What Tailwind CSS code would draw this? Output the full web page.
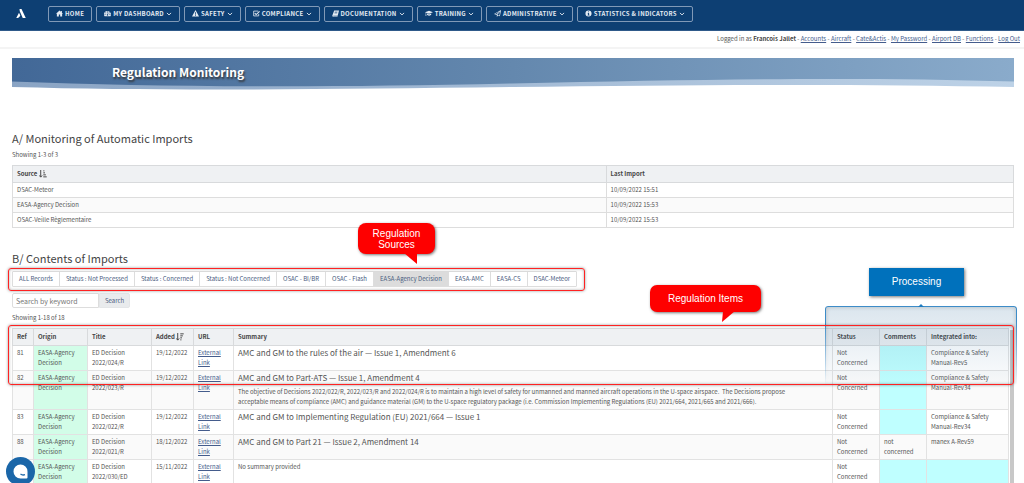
<!DOCTYPE html>
<html lang="en">
<head>
<meta charset="utf-8">
<meta name="viewport" content="width=device-width, initial-scale=1">
<title>Regulation Monitoring</title>
<script src="https://cdn.jsdelivr.net/npm/@tailwindcss/browser@4"></script>
</head>
<body class="relative h-screen overflow-hidden bg-white font-['Noto_Sans_CJK_SC','Noto_Sans',sans-serif] text-[6px] leading-[10px] text-[#555]">

<svg class="hidden" aria-hidden="true">
  <symbol id="chev" viewBox="0 0 8 8"><path d="M1.2 2.6 4 5.2 6.8 2.6" fill="none" stroke="currentColor" stroke-width="1.2"/></symbol>
</svg>

<header class="flex h-[31px] items-center border-b border-[#2f5a8a] bg-[#0d3f73] text-white">
  <a href="#" aria-label="Home page" class="ml-4 block w-8 pb-1">
    <svg class="h-[9px] w-[10px]" viewBox="0 0 20 18" fill="currentColor"><path d="M7 0h4l8.500 18h-6L7.500 4.500zM6 7.500l2.600 5.300C7.500 16 4.500 18 .5 18z"/></svg>
  </a>
  <nav class="flex gap-1 pb-[3px] leading-none font-bold text-[#e4ebf3] [&>button]:flex [&>button]:h-4 [&>button]:items-center [&>button]:gap-[2px] [&>button]:rounded-[2px] [&>button]:border [&>button]:border-[#8099b7] [&>button]:px-[7px] [&>button]:tracking-wider [&>button]:whitespace-nowrap">
    <button><svg class="size-[7px]" viewBox="0 0 16 16" fill="currentColor"><path d="M8 1 0 8.500h2V15h4.500v-4.500h3V15H14V8.500h2L13.500 6V2h-2v2.200z"/></svg>HOME</button>
    <button><svg class="size-[7px]" viewBox="0 0 16 16" fill="currentColor"><path fill-rule="evenodd" d="M8 2a8 8 0 0 0-8 8c0 1.600.5 3 1.200 4h13.600A8 8 0 0 0 8 2zM7 3.500h2v2H7zM3 5.500h2v2H3zm8 0h2v2h-2zM1.500 9.500h2v2h-2zm11 0h2v2h-2zM9 6l1 .3-.8 3.700A1.700 1.700 0 1 1 8 9.500z"/></svg>MY DASHBOARD<svg class="size-[6px]"><use href="#chev"/></svg></button>
    <button><svg class="size-[7px]" viewBox="0 0 16 16" fill="currentColor"><path fill-rule="evenodd" d="M8 0 0 15h16zM7 5h2l-.3 5H7.300zm0 6h2v2H7z"/></svg>SAFETY<svg class="size-[6px]"><use href="#chev"/></svg></button>
    <button><svg class="size-[7px]" viewBox="0 0 16 16" fill="none" stroke="currentColor" stroke-width="1.800"><path d="M13 9v4.500H1.500V2.500H12"/><path d="m4 7 3.300 3.500L15 3" stroke-width="2.500"/></svg>COMPLIANCE<svg class="size-[6px]"><use href="#chev"/></svg></button>
    <button><svg class="size-[7px]" viewBox="0 0 16 16" fill="currentColor"><path fill-rule="evenodd" d="M5 1h11l-3 12H3.500c-.8 0-.8 1.200 0 1.200H13l-.3 1.300H2.500C.5 15.500.5 13 1.200 11.500zM6.500 4l-.3 1h6l.3-1zm-.6 2.500-.3 1h6l.3-1z"/></svg>DOCUMENTATION<svg class="size-[6px]"><use href="#chev"/></svg></button>
    <button><svg class="h-[7px] w-2" viewBox="0 0 18 16" fill="currentColor"><path d="M9 1.500 18 5 9 8.500 2.500 6v3l.7 4H.8l.7-4V5.500L0 5zM4.500 8.200 9 10l5-1.800V11c-1 2.500-8.500 2.500-9.500 0z"/></svg>TRAINING<svg class="size-[6px]"><use href="#chev"/></svg></button>
    <button><svg class="size-[7px]" viewBox="0 0 16 16" fill="currentColor"><path fill-rule="evenodd" d="M16 0 13.500 14.500 9 12.700 6.500 16v-4.500L0 9zM13.500 3 3 8.700l2.500 1zM13.800 4 7.500 10.700l4.800 2z"/></svg>ADMINISTRATIVE<svg class="size-[6px]"><use href="#chev"/></svg></button>
    <button><svg class="size-[7px]" viewBox="0 0 16 16" fill="currentColor"><path fill-rule="evenodd" d="M8 1a7 7 0 1 0 0 14A7 7 0 0 0 8 1zM6.800 3.200h2.400v2.200H6.800zM6 6.600h3.300v4.400h1v1.700H6V11h1V8.200H6z"/></svg>STATISTICS &amp; INDICATORS<svg class="size-[6px]"><use href="#chev"/></svg></button>
  </nav>
</header>

<div class="flex h-[18px] items-center justify-end border-b-2 border-[#f4f4f4] pr-1">
  <p class="[&_a]:text-[#445c8c] [&_a]:underline">Logged in as <b class="text-[#444]">Francois Jallet</b> - <a href="#">Accounts</a> - <a href="#">Aircraft</a> - <a href="#">Cate&amp;Actis</a> - <a href="#">My Password</a> - <a href="#">Airport DB</a> - <a href="#">Functions</a> - <a href="#">Log Out</a></p>
</div>

<main class="pr-[10px] pl-3">
  <div class="relative mt-[9px] h-8">
    <svg class="absolute inset-0 size-full" viewBox="0 0 1002 32" preserveAspectRatio="none" aria-hidden="true">
      <defs>
        <linearGradient id="deep"><stop offset="0" stop-color="#426897"/><stop offset=".5" stop-color="#6488ae"/><stop offset="1" stop-color="#8aabcb"/></linearGradient>
        <linearGradient id="pale"><stop offset="0" stop-color="#8aa4c4"/><stop offset="1" stop-color="#bdd2e7"/></linearGradient>
      </defs>
      <path fill="url(#pale)" d="M0 0H1002V29C850 26 700 26.500 500 29S150 33 0 29z"/>
      <path fill="url(#deep)" d="M0 0H1002V23.500C850 19 700 21 500 25.500S150 29 0 23.500z"/>
    </svg>
    <h1 class="relative pl-[100px] text-[12px] leading-[27px] font-bold text-white [text-shadow:1px_2px_2px_#333]">Regulation Monitoring</h1>
  </div>

  <h2 class="mt-[40px] text-[11px] leading-4 text-[#444]">A/ Monitoring of Automatic Imports</h2>
  <p class="mt-1">Showing 1-3 of 3</p>
  <table class="mt-[5px] w-full table-fixed border-collapse text-left [&_td]:border [&_td]:border-[#ddd] [&_td]:px-1 [&_td]:py-[2px] [&_th]:border [&_th]:border-[#d8dadc] [&_th]:px-1 [&_th]:py-[3px]">
    <thead><tr class="bg-[#eff1f3] text-[#444]">
      <th class="w-[59.3%]"><span class="inline-flex items-center gap-[2px]">Source<svg class="size-2" viewBox="0 0 14 14" fill="none" stroke="currentColor" stroke-width="1.700"><path d="M3 0v12M.5 9.500 3 12.500l2.500-3M7.500 1.500h2M7.500 5h3M7.500 8.500h4.500M7.500 12h6"/></svg></span></th>
      <th>Last Import</th></tr></thead>
    <tbody>
      <tr><td>DSAC-Meteor</td><td>10/09/2022 15:51</td></tr>
      <tr class="bg-[#fafafa]"><td>EASA-Agency Decision</td><td>10/09/2022 15:53</td></tr>
      <tr><td>OSAC-Veille Règlementaire</td><td>10/09/2022 15:53</td></tr>
    </tbody>
  </table>

  <h2 class="mt-[22px] text-[11px] leading-4 text-[#444]">B/ Contents of Imports</h2>
  <div class="relative mt-[5px] w-max">
    <div class="flex h-4 rounded-[1px] border border-[#ddd] text-[#4b5c80] [&>button]:border-r [&>button]:border-[#ddd] [&>button]:px-[6px] [&>button]:whitespace-nowrap [&>button:last-child]:border-r-0">
      <button>ALL Records</button><button>Status : Not Processed</button><button>Status : Concerned</button><button>Status : Not Concerned</button><button>OSAC - BI/BR</button><button>OSAC - Flash</button><button class="bg-[#dcdcdc]">EASA-Agency Decision</button><button>EASA-AMC</button><button>EASA-CS</button><button>DSAC-Meteor</button>
    </div>
    <div class="pointer-events-none absolute -top-[3px] -right-2 -bottom-1 -left-[4px] rounded-[3px] border border-[#f22] shadow-[0_0_3px_#0006,inset_0_0_3px_#0005]"></div>
    <div class="absolute bottom-[33px] left-[346px] flex h-[31px] w-[77px] items-center justify-center rounded-[8px] bg-[#fe0000] text-center font-['Liberation_Sans',sans-serif] text-[10px] leading-[11px] text-white shadow-[1px_1px_3px_#0008]">Regulation<br>Sources
      <svg class="absolute top-[30px] left-[46px] h-3 w-[14px]" viewBox="0 0 14 12" fill="#fe0000"><path d="M0 0h13v11z"/></svg>
    </div>
  </div>

  <form class="mt-[6px] flex h-[15px]">
    <input aria-label="Search by keyword" placeholder="Search by keyword" class="w-[87px] rounded-l-[2px] border border-[#ddd] px-[3px] text-[7px] placeholder:text-[#777]">
    <button type="button" class="rounded-r-[2px] border border-[#e4e6e8] bg-[#e9ebed] px-[5px] text-[#4b5c80]">Search</button>
  </form>
  <p class="mt-[5px]">Showing 1-18 of 18</p>

  <div class="relative mt-[5px] pr-[5px]">
    <table class="w-full table-fixed border-collapse text-left align-top [&_td]:border [&_td]:border-[#e2e2e2] [&_td]:px-1 [&_td]:py-[2px] [&_td]:align-top [&_th]:border [&_th]:border-[#d8dadc] [&_th]:px-1 [&_th]:py-[3px] [&_th]:whitespace-nowrap [&_a]:text-[#445c8c] [&_a]:underline">
      <colgroup><col class="w-[21px]"><col class="w-[54px]"><col class="w-16"><col class="w-[42px]"><col class="w-10"><col><col class="w-[47px]"><col class="w-[47px]"><col class="w-[82px]"></colgroup>
      <thead><tr class="bg-[#eff1f3] text-[#444]"><th>Ref</th><th>Origin</th><th>Title</th><th><span class="inline-flex items-center gap-px">Added<svg class="size-2" viewBox="0 0 14 14" fill="none" stroke="currentColor" stroke-width="1.700"><path d="M3 0v12M.5 9.500 3 12.500l2.500-3M7.500 1.500h6M7.500 5h4.500M7.500 8.500h3M7.500 12h2"/></svg></span></th><th>URL</th><th>Summary</th><th>Status</th><th>Comments</th><th>Integrated into:</th></tr></thead>
      <tbody>
        <tr><td>81</td><td class="bg-[#d2fde8]">EASA-Agency Decision</td><td>ED Decision 2022/024/R</td><td>19/12/2022</td><td><a href="#">External<br>Link</a></td><td><p class="text-[8px]">AMC and GM to the rules of the air — Issue 1, Amendment 6</p></td><td>Not Concerned</td><td class="bg-[#bfffff]"></td><td>Compliance &amp; Safety Manual-Rev5</td></tr>
        <tr class="bg-[#fafafa]"><td>82</td><td class="bg-[#d2fde8]">EASA-Agency Decision</td><td>ED Decision 2022/023/R</td><td>19/12/2022</td><td><a href="#">External<br>Link</a></td><td><p class="text-[8px]">AMC and GM to Part-ATS — Issue 1, Amendment 4</p><p class="mt-1 pr-[30px]">The objective of Decisions 2022/022/R, 2022/023/R and 2022/024/R is to maintain a high level of safety for unmanned and manned aircraft operations in the U-space airspace.&nbsp; The Decisions propose acceptable means of compliance (AMC) and guidance material (GM) to the U-space regulatory package (i.e. Commission Implementing Regulations (EU) 2021/664, 2021/665 and 2021/666).</p></td><td>Not Concerned</td><td class="bg-[#bfffff]"></td><td>Compliance &amp; Safety Manual-Rev34</td></tr>
        <tr><td>83</td><td class="bg-[#d2fde8]">EASA-Agency Decision</td><td>ED Decision 2022/022/R</td><td>19/12/2022</td><td><a href="#">External<br>Link</a></td><td><p class="text-[8px]">AMC and GM to Implementing Regulation (EU) 2021/664 — Issue 1</p></td><td>Not Concerned</td><td class="bg-[#bfffff]"></td><td>Compliance &amp; Safety Manual-Rev34</td></tr>
        <tr class="bg-[#fafafa]"><td>88</td><td class="bg-[#d2fde8]">EASA-Agency Decision</td><td>ED Decision 2022/021/R</td><td>18/12/2022</td><td><a href="#">External<br>Link</a></td><td><p class="text-[8px]">AMC and GM to Part 21 — Issue 2, Amendment 14</p></td><td>Not Concerned</td><td>not concerned</td><td>manex A-Rev59</td></tr>
        <tr><td></td><td class="bg-[#d2fde8]">EASA-Agency Decision</td><td>ED Decision 2022/030/ED</td><td>15/11/2022</td><td><a href="#">External<br>Link</a></td><td>No summary provided</td><td>Not Concerned</td><td class="bg-[#bfffff]"></td><td class="bg-[#bfffff]"></td></tr>
      </tbody>
    </table>
    <div class="absolute top-[2px] right-0 bottom-0 w-1 bg-[#c8c8c8]"></div>

    <div class="pointer-events-none absolute -top-[22px] -right-[3px] h-[78px] w-[192px] rounded-t-[3px] bg-linear-to-b from-[#4a7fa833] to-[#4a7fa805]">
      <div class="absolute inset-0 rounded-t-[3px] border border-b-0 border-[#3d8cc8] shadow-[0_0_3px_#0003,inset_0_0_4px_#0003] mask-b-from-20%"></div>
      <svg class="absolute -top-[2px] left-[93px] h-[3px] w-[6px]" viewBox="0 0 6 3" fill="#1f7cc0"><path d="M3 0 6 3H0z"/></svg>
    </div>
    <div class="pointer-events-none absolute -top-[3px] right-0 h-[60px] -left-[4px] rounded-[3px] border border-[#f22] shadow-[0_0_3px_#0006,inset_0_0_3px_#0005]"></div>
    <div class="absolute -top-[43px] right-[253px] flex h-[27px] w-[111px] items-center justify-center rounded-[7px] bg-[#fe0000] font-['Liberation_Sans',sans-serif] text-[10px] text-white shadow-[1px_1px_3px_#0008]">Regulation Items
      <svg class="absolute top-[26px] left-[71px] h-[11px] w-[14px]" viewBox="0 0 14 11" fill="#fe0000"><path d="M2 0h12L1 11z"/></svg>
    </div>
    <div class="absolute -top-[60px] right-[50px] flex h-[28px] w-[95px] items-center justify-center bg-[#0071bc] font-['Liberation_Sans',sans-serif] text-[10px] text-white shadow-[1px_1px_3px_#0008]">Processing</div>
  </div>
</main>

<button aria-label="Open chat" class="fixed top-[457px] left-[6px] size-[29px] rounded-full bg-[#1a66a8]">
  <svg class="size-full" viewBox="0 0 29 29"><path d="M14.500 7.500a7 7 0 1 0 0 14h6q1 0 1-1v-6a7 7 0 0 0-7-7z" fill="#fff"/><path d="M14.500 17q2 1.600 4.500.6" fill="none" stroke="#1a66a8" stroke-width="1.300"/></svg>
</button>
</body>
</html>
